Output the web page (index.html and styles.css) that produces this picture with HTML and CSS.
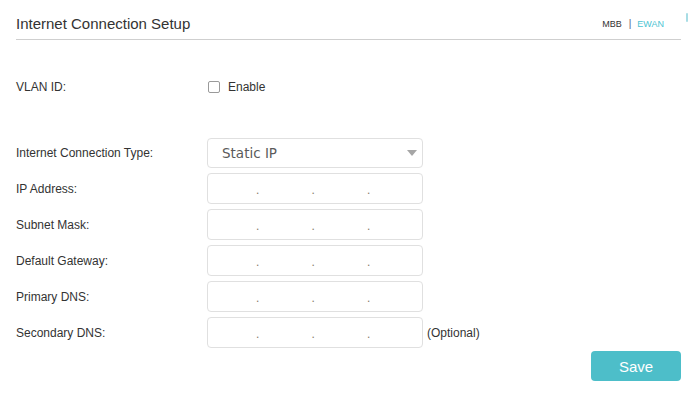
FILE: index.html
```html
<!DOCTYPE html>
<html>
<head>
<meta charset="utf-8">
<link rel="stylesheet" href="styles.css">
</head>
<body>
<div class="page">
  <div class="header">
    <h1 class="title">Internet Connection Setup</h1>
    <div class="switch"><span class="mbb">MBB</span><span class="sep">|</span><span class="ewan">EWAN</span></div>
  </div>
  <span class="edge"></span>

  <div class="vlan-row">
    <span class="label">VLAN ID:</span>
    <label class="check"><span class="box-check"></span><span>Enable</span></label>
  </div>

  <div class="form">
    <div class="row">
      <span class="label">Internet Connection Type:</span>
      <div class="select"><span>Static IP</span><span class="arrow"></span></div>
    </div>
    <div class="row">
      <span class="label">IP Address:</span>
      <div class="ip"><span class="seg"></span><span class="dot">.</span><span class="seg"></span><span class="dot">.</span><span class="seg"></span><span class="dot">.</span><span class="seg"></span></div>
    </div>
    <div class="row">
      <span class="label">Subnet Mask:</span>
      <div class="ip"><span class="seg"></span><span class="dot">.</span><span class="seg"></span><span class="dot">.</span><span class="seg"></span><span class="dot">.</span><span class="seg"></span></div>
    </div>
    <div class="row">
      <span class="label">Default Gateway:</span>
      <div class="ip"><span class="seg"></span><span class="dot">.</span><span class="seg"></span><span class="dot">.</span><span class="seg"></span><span class="dot">.</span><span class="seg"></span></div>
    </div>
    <div class="row">
      <span class="label">Primary DNS:</span>
      <div class="ip"><span class="seg"></span><span class="dot">.</span><span class="seg"></span><span class="dot">.</span><span class="seg"></span><span class="dot">.</span><span class="seg"></span></div>
    </div>
    <div class="row">
      <span class="label">Secondary DNS:</span>
      <div class="ip"><span class="seg"></span><span class="dot">.</span><span class="seg"></span><span class="dot">.</span><span class="seg"></span><span class="dot">.</span><span class="seg"></span></div>
      <span class="hint">(Optional)</span>
    </div>
    <div class="actions">
      <button class="save">Save</button>
    </div>
  </div>
</div>
</body>
</html>
```

FILE: styles.css
```css
* { box-sizing: border-box; }
html, body { margin: 0; padding: 0; background: #fff; }
body {
  font-family: "Liberation Sans", Arial, sans-serif;
  color: #333;
  width: 688px;
  height: 404px;
  overflow: hidden;
  position: relative;
}
.page {
  padding: 0 7px 0 16px;
}
.header {
  height: 40px;
  display: flex;
  align-items: center;
  justify-content: space-between;
  padding-top: 7px;
  border-bottom: 1px solid #cfcfcf;
}
.title {
  margin: 0;
  font-size: 15px;
  font-weight: normal;
  color: #333;
}
.switch {
  font-size: 9px;
  display: flex;
  align-items: center;
  margin-right: 17px;
  padding-top: 1px;
}
.mbb { color: #333; }
.sep { color: #4a5a7a; margin: 0 6px 0 7px; font-size: 10px; }
.ewan { color: #4bc3d2; }
.edge {
  position: absolute;
  left: 686px;
  top: 13px;
  width: 2px;
  height: 9px;
  border-radius: 1px;
  background: #a8dde5;
}
.label {
  width: 191px;
  flex: none;
  font-size: 12px;
  color: #333;
}
.vlan-row {
  margin-top: 32px;
  height: 30px;
  display: flex;
  align-items: center;
}
.check {
  display: flex;
  align-items: center;
  font-size: 12px;
  color: #333;
  margin-left: 1px;
}
.box-check {
  width: 12px;
  height: 12px;
  border: 1px solid #9a9a9a;
  border-radius: 2px;
  margin-right: 8px;
}
.form {
  margin-top: 36px;
  display: flex;
  flex-direction: column;
  gap: 5px;
}
.row {
  display: flex;
  align-items: center;
}
.select {
  width: 216px;
  height: 30px;
  border: 1px solid #e0e0e0;
  border-radius: 4px;
  display: flex;
  align-items: center;
  justify-content: space-between;
  padding: 0 5px 0 14px;
  font-family: "DejaVu Sans", Verdana, sans-serif;
  font-size: 13.5px;
  color: #5a5a5a;
}
.arrow {
  width: 0;
  height: 0;
  border-left: 5px solid transparent;
  border-right: 5px solid transparent;
  border-top: 6px solid #a6a6a6;
  margin-top: -1px;
}
.ip {
  width: 216px;
  height: 31px;
  border: 1px solid #e0e0e0;
  border-radius: 4px;
  display: flex;
  align-items: center;
  font-size: 12px;
  color: #8a7a6a;
}
.seg { width: 48px; flex: none; }
.seg:first-child { width: 46px; }
.dot {
  width: 7.5px;
  flex: none;
  text-align: center;
  padding-top: 3px;
}
.hint {
  font-size: 12px;
  color: #333;
  margin-left: 4px;
}
.actions {
  display: flex;
  justify-content: flex-end;
  margin-top: -2px;
}
.save {
  width: 90px;
  height: 30px;
  border: none;
  border-radius: 4px;
  background: #4dbec9;
  color: #fff;
  font-family: "Liberation Sans", Arial, sans-serif;
  font-size: 15px;
  padding: 0;
}
```
